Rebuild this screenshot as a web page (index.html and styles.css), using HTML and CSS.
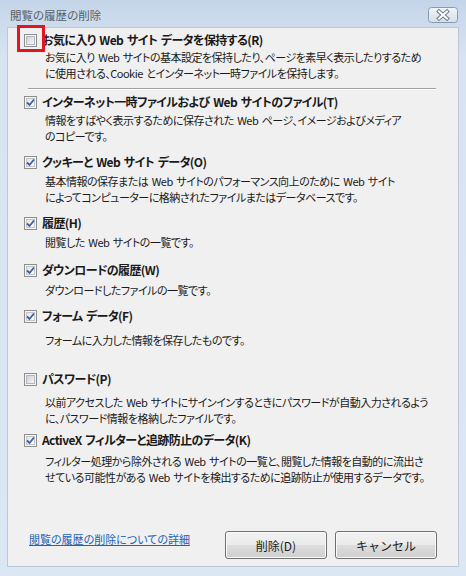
FILE: index.html
```html
<!DOCTYPE html>
<html lang="ja">
<head>
    <meta charset="utf-8"/>
    <title>閲覧の履歴の削除</title>
    <link rel="stylesheet" href="styles.css">
</head>
<body>
<div class="window">
    <div class="titlebar">
        <span class="title">閲覧の履歴の削除</span>
        <span class="close">
            <svg width="30" height="16" viewBox="0 0 30 16">
                <defs>
                    <linearGradient id="closebg" x1="0" y1="0" x2="0" y2="1">
                        <stop offset="0" stop-color="#f3f6fa"/>
                        <stop offset="0.5" stop-color="#e3e9f1"/>
                        <stop offset="1" stop-color="#d6dfea"/>
                    </linearGradient>
                </defs>
                <rect x="0.5" y="0.5" width="29" height="15" rx="3" fill="url(#closebg)" stroke="#8a9aae"/>
                <path d="M11 4.5 L19 11.5 M19 4.5 L11 11.5" stroke="#6f7a88" stroke-width="4" stroke-linecap="square"/>
                <path d="M11 4.5 L19 11.5 M19 4.5 L11 11.5" stroke="#ffffff" stroke-width="2" stroke-linecap="square"/>
            </svg>
        </span>
    </div>

    <div class="client">
        <div class="options">
            <div class="item item-keep">
                <div class="head">
                    <span class="check"><span class="highlight"></span></span>
                    <span class="label">お気に入り Web サイト データを保持する(R)</span>
                </div>
                <p class="desc">お気に入り Web サイトの基本設定を保持したり、ページを素早く表示したりするため<br>に使用される、Cookie とインターネット一時ファイルを保持します。</p>
            </div>

            <hr class="sep">

            <div class="item item-temp">
                <div class="head">
                    <span class="check checked"><svg width="9" height="9" viewBox="0 0 9 9"><path d="M1 4.5 L3.5 7 L8 1.5" fill="none" stroke="#3f5e9c" stroke-width="1.8"/></svg></span>
                    <span class="label">インターネット一時ファイルおよび Web サイトのファイル(T)</span>
                </div>
                <p class="desc">情報をすばやく表示するために保存された Web ページ、イメージおよびメディア<br>のコピーです。</p>
            </div>

            <div class="item item-cookie">
                <div class="head">
                    <span class="check checked"><svg width="9" height="9" viewBox="0 0 9 9"><path d="M1 4.5 L3.5 7 L8 1.5" fill="none" stroke="#3f5e9c" stroke-width="1.8"/></svg></span>
                    <span class="label">クッキーと Web サイト データ(O)</span>
                </div>
                <p class="desc">基本情報の保存または Web サイトのパフォーマンス向上のために Web サイト<br>によってコンピューターに格納されたファイルまたはデータベースです。</p>
            </div>

            <div class="item item-history">
                <div class="head">
                    <span class="check checked"><svg width="9" height="9" viewBox="0 0 9 9"><path d="M1 4.5 L3.5 7 L8 1.5" fill="none" stroke="#3f5e9c" stroke-width="1.8"/></svg></span>
                    <span class="label">履歴(H)</span>
                </div>
                <p class="desc">閲覧した Web サイトの一覧です。</p>
            </div>

            <div class="item item-download">
                <div class="head">
                    <span class="check checked"><svg width="9" height="9" viewBox="0 0 9 9"><path d="M1 4.5 L3.5 7 L8 1.5" fill="none" stroke="#3f5e9c" stroke-width="1.8"/></svg></span>
                    <span class="label">ダウンロードの履歴(W)</span>
                </div>
                <p class="desc">ダウンロードしたファイルの一覧です。</p>
            </div>

            <div class="item item-form">
                <div class="head">
                    <span class="check checked"><svg width="9" height="9" viewBox="0 0 9 9"><path d="M1 4.5 L3.5 7 L8 1.5" fill="none" stroke="#3f5e9c" stroke-width="1.8"/></svg></span>
                    <span class="label">フォーム データ(F)</span>
                </div>
                <p class="desc">フォームに入力した情報を保存したものです。</p>
            </div>

            <div class="item item-password">
                <div class="head">
                    <span class="check"></span>
                    <span class="label">パスワード(P)</span>
                </div>
                <p class="desc">以前アクセスした Web サイトにサインインするときにパスワードが自動入力されるよう<br>に、パスワード情報を格納したファイルです。</p>
            </div>

            <div class="item item-activex">
                <div class="head">
                    <span class="check checked"><svg width="9" height="9" viewBox="0 0 9 9"><path d="M1 4.5 L3.5 7 L8 1.5" fill="none" stroke="#3f5e9c" stroke-width="1.8"/></svg></span>
                    <span class="label">ActiveX フィルターと追跡防止のデータ(K)</span>
                </div>
                <p class="desc">フィルター処理から除外される Web サイトの一覧と、閲覧した情報を自動的に流出さ<br>せている可能性がある Web サイトを検出するために追跡防止が使用するデータです。</p>
            </div>
        </div>

        <div class="footer">
            <a class="more" href="#">閲覧の履歴の削除についての詳細</a>
            <div class="buttons">
                <button type="button">削除(D)</button>
                <button type="button">キャンセル</button>
            </div>
        </div>
    </div>
</div>
</body>
</html>
```

FILE: styles.css
```css
body {
    margin: 0;
    font-family: "Noto Sans CJK JP", "Noto Sans", sans-serif;
    font-feature-settings: "palt";
    color: #1a1a1a;
}

.window {
    width: 466px;
    height: 576px;
    box-sizing: border-box;
    padding: 0 7px 9px;
    display: flex;
    flex-direction: column;
    background: linear-gradient(#c5d5e9, #d8e4f2 60px, #dce7f4);
}

.titlebar {
    height: 27px;
    box-sizing: border-box;
    padding: 7px 1px 0 3px;
    display: flex;
    justify-content: space-between;
    align-items: flex-start;
}

.title {
    font-size: 11.5px;
    line-height: 16px;
    color: #5a5f66;
}

.close svg {
    display: block;
}

.client {
    flex: 1;
    display: flex;
    flex-direction: column;
    background: #f0f0f0;
    border: 1px solid #b9c8da;
}

.options {
    flex: 1;
    padding: 4px 0 0 16px;
}

.head {
    display: flex;
    align-items: center;
    gap: 5px;
    height: 16px;
}

.label {
    font-size: 12px;
    font-weight: bold;
    line-height: 16px;
    letter-spacing: -0.6px;
    word-spacing: 1.5px;
    white-space: nowrap;
}

.check {
    position: relative;
    width: 13px;
    height: 13px;
    box-sizing: border-box;
    flex: none;
    border: 1px solid #8e8f8f;
    padding: 1px;
    background: #f4f4f4;
}

.check::before {
    content: "";
    display: block;
    width: 9px;
    height: 9px;
    box-sizing: border-box;
    border: 1px solid #b4b9bf;
    background: linear-gradient(135deg, #cdd1d7, #f7f7f7);
}

.check.checked::before {
    border-color: #c3c7cc;
    background: linear-gradient(135deg, #e2e4e8, #fbfbfb);
}

.check svg {
    position: absolute;
    left: 1px;
    top: 1px;
}

.highlight {
    position: absolute;
    left: -8px;
    top: -10px;
    width: 28px;
    height: 27px;
    box-sizing: border-box;
    border: 3px solid #e3161f;
}

.desc {
    margin: 1px 0 0 21px;
    font-size: 11px;
    line-height: 16px;
    letter-spacing: -0.5px;
    word-spacing: 1.5px;
    white-space: nowrap;
}

.sep {
    margin: 7px 22px 4px 4px;
    height: 0;
    border: 0;
    border-top: 1px solid #a0a0a0;
    border-bottom: 1px solid #ffffff;
}

.item-temp .desc { margin-top: 2px; }

.item-cookie { margin-top: 10px; }
.item-cookie .desc { margin-top: 3px; }

.item-history { margin-top: 10px; }
.item-history .desc { margin-top: 3px; }

.item-download { margin-top: 12px; }
.item-download .desc { margin-top: 4px; }

.item-form { margin-top: 10px; }
.item-form .desc { margin-top: 8px; }

.item-password { margin-top: 23px; }
.item-password .desc { margin-top: 7px; }

.item-activex { margin-top: 6px; }
.item-activex .desc { margin-top: 5px; }

.footer {
    display: flex;
    justify-content: space-between;
    align-items: flex-start;
    padding: 0 21px 7px;
}

.more {
    font-size: 11px;
    line-height: 16px;
    color: #1a64b8;
    text-decoration: underline;
}

.buttons {
    display: flex;
    gap: 8px;
}

.buttons button {
    width: 102px;
    height: 28px;
    font-family: inherit;
    font-size: 12px;
    color: #1a1a1a;
    border: 1px solid #707070;
    border-radius: 3px;
    background: linear-gradient(#f2f2f2, #ebebeb 50%, #dddddd 50%, #cfcfcf);
    box-shadow: inset 0 0 0 1px #fbfbfb;
}
```
